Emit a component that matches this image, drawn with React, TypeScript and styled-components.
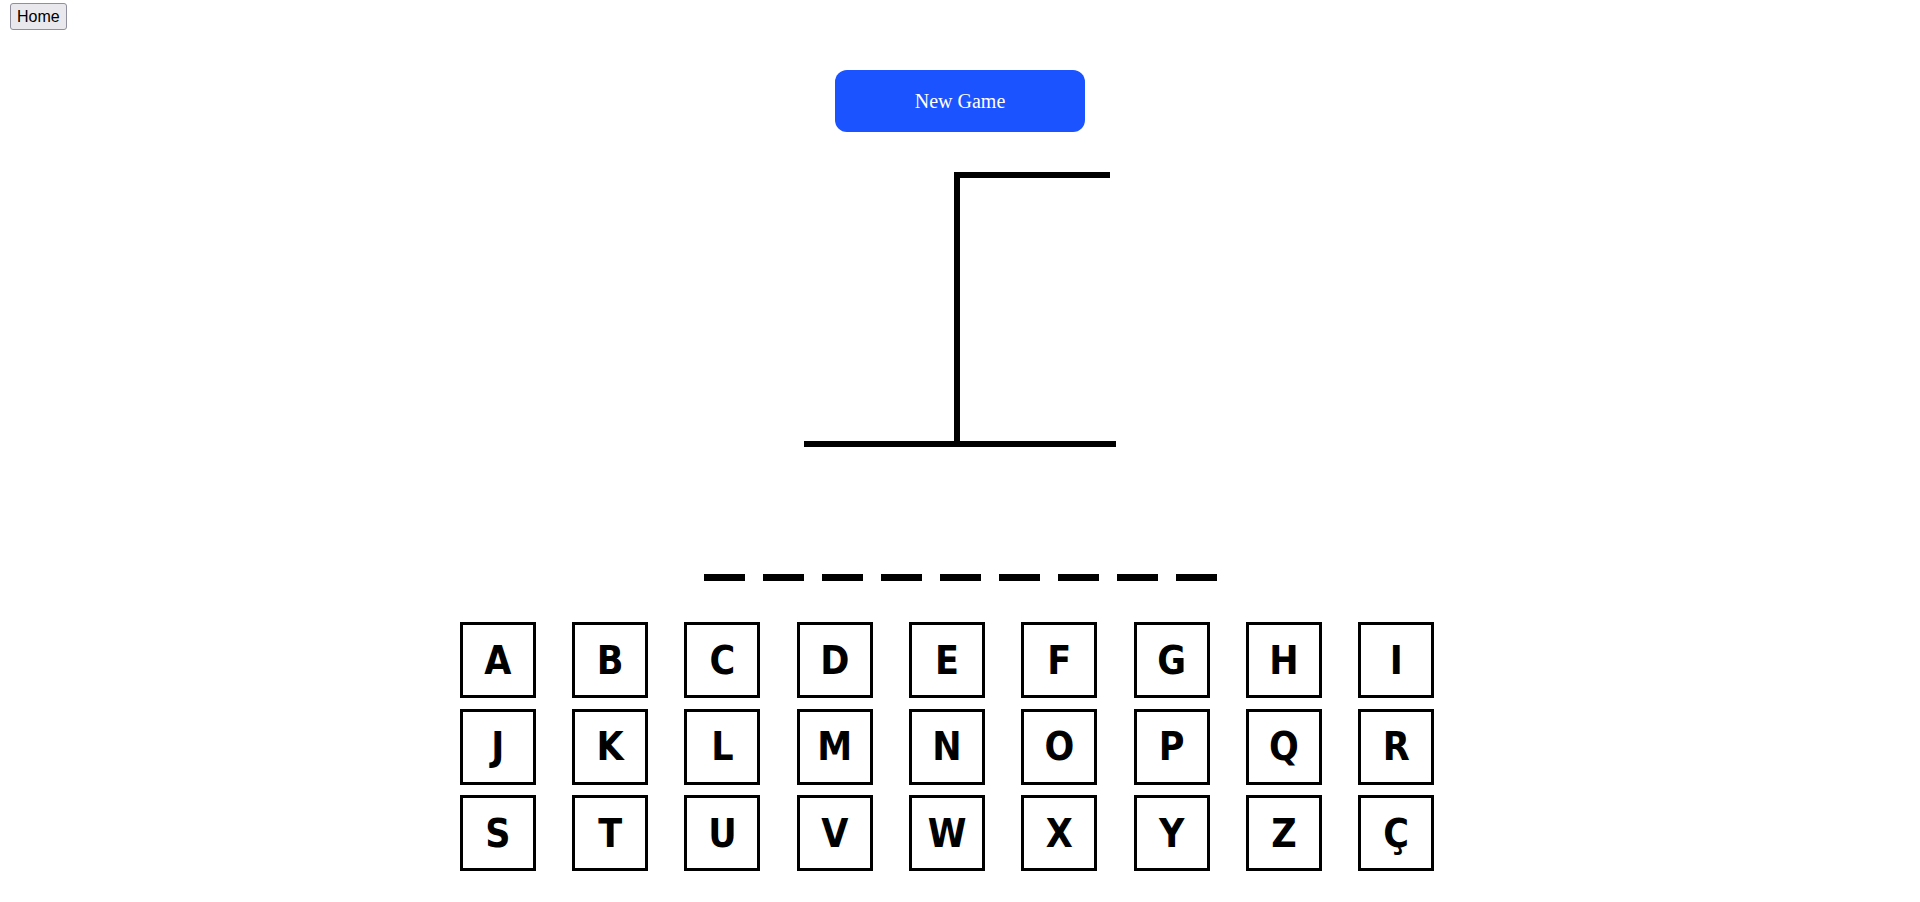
import React from 'react';
import styled, { createGlobalStyle } from 'styled-components';

const GlobalStyle = createGlobalStyle`
  html, body {
    margin: 0;
    padding: 0;
    background: #ffffff;
  }
`;

const Page = styled.div`
  width: 1920px;
  min-height: 902px;
  padding-top: 3px;
  box-sizing: border-box;
`;

const HomeButton = styled.button`
  display: block;
  margin-left: 10px;
  height: 27px;
  padding: 0 6px;
  font-family: "Liberation Sans", Arial, sans-serif;
  font-size: 16px;
  color: #000;
  background: #e9e9ed;
  border: 1px solid #8f8f9d;
  border-radius: 3px;
`;

const Game = styled.div`
  display: flex;
  flex-direction: column;
  align-items: center;
`;

const NewGameButton = styled.button`
  margin-top: 40px;
  width: 250px;
  height: 62px;
  border: none;
  border-radius: 12px;
  background: #1a53ff;
  color: #ffffff;
  font-family: "Liberation Serif", "Times New Roman", serif;
  font-size: 20px;
`;

const Gallows = styled.svg`
  display: block;
  margin-top: 38px;
`;

const Word = styled.div`
  display: flex;
  margin-top: 127px;
`;

const Dash = styled.span`
  width: 41px;
  height: 7px;
  margin: 0 9px;
  background: #000;
`;

const Keyboard = styled.div`
  display: grid;
  grid-template-columns: repeat(9, 76px);
  column-gap: 36.3px;
  row-gap: 10.5px;
  margin-top: 41px;
  margin-right: 26px;
`;

const Key = styled.button`
  width: 76px;
  height: 76px;
  padding: 0;
  box-sizing: border-box;
  border: 3px solid #000;
  background: #fff;
  color: #000;
  font-family: "DejaVu Sans Condensed", "DejaVu Sans", Verdana, sans-serif;
  font-weight: bold;
  font-size: 39px;
  display: flex;
  align-items: center;
  justify-content: center;
`;

const letters = 'ABCDEFGHIJKLMNOPQRSTUVWXYZÇ'.split('');
const wordLength = 9;

export default function App() {
  return (
    <Page>
      <GlobalStyle />
      <HomeButton>Home</HomeButton>
      <Game>
        <NewGameButton>New Game</NewGameButton>
        <Gallows width="312" height="277" viewBox="0 0 312 277">
          <rect x="0" y="271" width="312" height="6" fill="#000" />
          <rect x="150" y="2" width="6" height="272" fill="#000" />
          <rect x="150" y="2" width="156" height="6" fill="#000" />
        </Gallows>
        <Word>
          {Array.from({ length: wordLength }).map((_, i) => (
            <Dash key={i} />
          ))}
        </Word>
        <Keyboard>
          {letters.map((l) => (
            <Key key={l}>{l}</Key>
          ))}
        </Keyboard>
      </Game>
    </Page>
  );
}
